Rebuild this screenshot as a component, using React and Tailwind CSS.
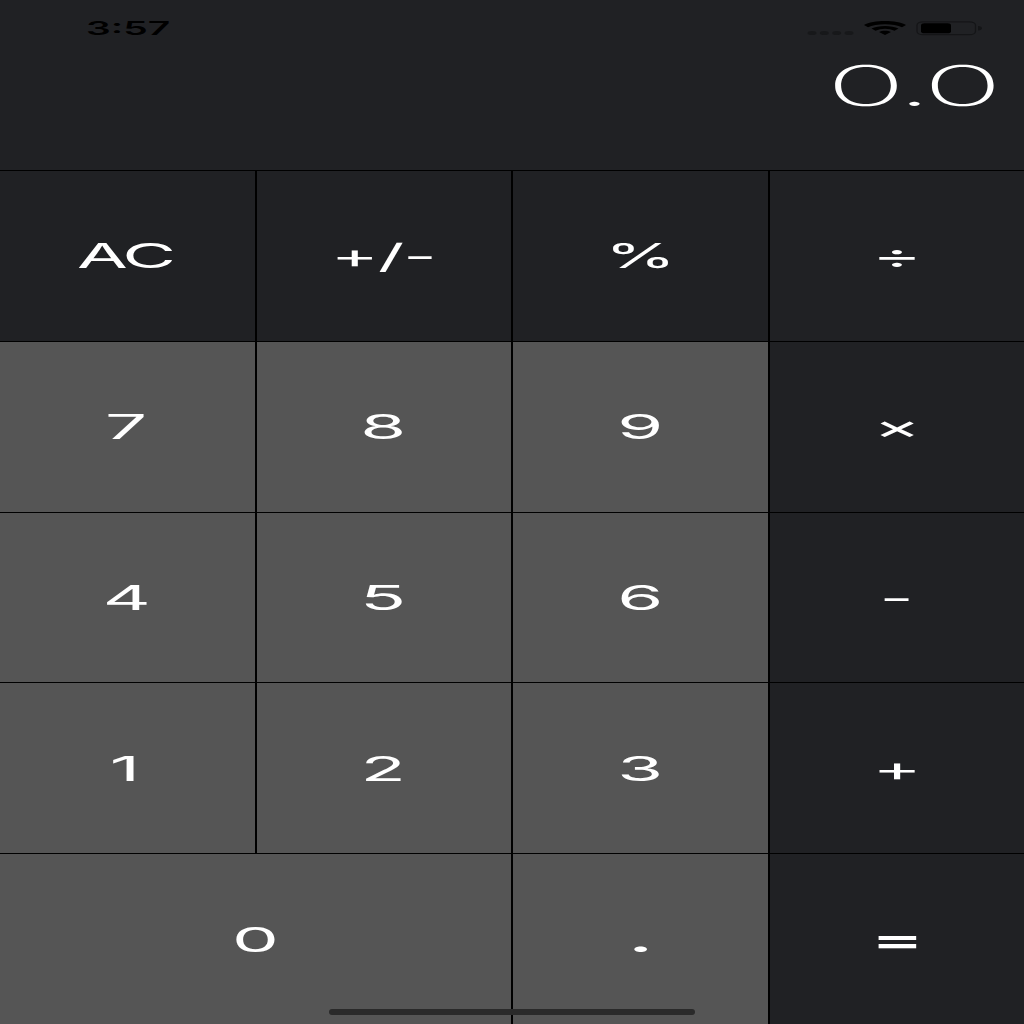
const keys = [
  { label: "AC", dark: true, style: "font-normal scale-x-[2.2] -tracking-[1.4px] pr-[1.4px]" },
  { label: "+/-", dark: true, style: "font-normal scale-x-[2.17] -tracking-[0.4px]" },
  { label: "%", dark: true, style: "font-normal scale-x-[2.16]" },
  { label: "÷", dark: true, style: "font-normal scale-x-[2.3]", right: true },
  { label: "7", style: "font-normal scale-x-[2.22] pr-[0.8px]" },
  { label: "8" },
  { label: "9" },
  { label: "×", dark: true, style: "font-normal scale-x-[2.15]", right: true },
  { label: "4" },
  { label: "5", style: "font-normal scale-x-[2.27]" },
  { label: "6" },
  { label: "-", dark: true, right: true },
  { label: "1", style: "font-normal scale-x-[2.22] pr-[1.6px]", low: true },
  { label: "2", low: true },
  { label: "3", low: true },
  { label: "+", dark: true, low: true, right: true },
  { label: "0", wide: true, low: true, right: true },
  { label: ".", style: "font-bold scale-x-[2.22]", low: true, right: true },
  { label: "=", dark: true, style: "font-bold scale-x-[2.3]", low: true, right: true },
];

function Key({ label, dark, wide, low, right, style = "font-normal scale-x-[2.22]" }) {
  return (
    <button
      className={`flex items-center justify-center text-white ${dark ? "bg-[#202124]" : "bg-[#555555]"} ${wide ? "col-span-2" : ""} ${low ? "pt-[2px]" : ""} ${right ? "" : "pr-px"}`}
    >
      <span className={`block text-[33.5px] leading-[34px] ${style}`}>{label}</span>
    </button>
  );
}

function StatusBar() {
  return (
    <div className="flex h-[56px] items-start justify-between pl-[86px] pr-[42px] pt-[18px]">
      <span className="block origin-left scale-x-[2.05] text-[19px] font-semibold leading-[21px] text-black">3:57</span>
      <svg width="176" height="22" viewBox="0 0 176 22">
        <g fill="#17181a">
          <ellipse cx="6" cy="15" rx="4.5" ry="2" />
          <ellipse cx="18.3" cy="15" rx="4.5" ry="2" />
          <ellipse cx="30.7" cy="15" rx="4.5" ry="2" />
          <ellipse cx="43" cy="15" rx="4.5" ry="2" />
        </g>
        <path d="M58 7 C67 1.600 91 1.600 100 7 L96 9.200 C88 5.200 70 5.200 62 9.200 Z" />
        <path d="M65.500 10.600 C72 7 86 7 92.500 10.600 L88.500 12.700 C83 10 75 10 69.500 12.700 Z" />
        <path d="M73 14 C76 12.400 82 12.400 85 14 L79 17 Z" />
        <rect x="111" y="3.800" width="58.500" height="12.900" rx="6" ry="3.500" fill="none" stroke="#141517" strokeWidth="1.300" />
        <rect x="115" y="5.300" width="30" height="10" rx="3.500" ry="2" fill="#000" />
        <path d="M172 8 Q176 8.500 176 10.200 Q176 12 172 12.500 Z" fill="#141517" />
      </svg>
    </div>
  );
}

export default function App() {
  return (
    <main className="relative flex h-[1024px] w-[1024px] flex-col overflow-hidden bg-black [font-family:Inter,'Liberation_Sans',sans-serif]">
      <header className="h-[170px] shrink-0 bg-[#202124]">
        <StatusBar />
        <div className="flex justify-end pr-[28px]">
          <span className="block origin-right scale-x-[2.35] text-[56px] font-extralight leading-[60px] -tracking-[2.6px] text-white">0.0</span>
        </div>
      </header>
      <section className="mt-px grid shrink-0 grid-cols-[255px_254px_255px_254px] grid-rows-[170px_170px_169px_170px_170px] gap-x-[2px] gap-y-px">
        {keys.map((key) => (
          <Key key={key.label} {...key} />
        ))}
      </section>
      <div className="absolute bottom-[9px] left-[329px] h-[6px] w-[366px] rounded-full bg-[#2a2a2a]" />
    </main>
  );
}
